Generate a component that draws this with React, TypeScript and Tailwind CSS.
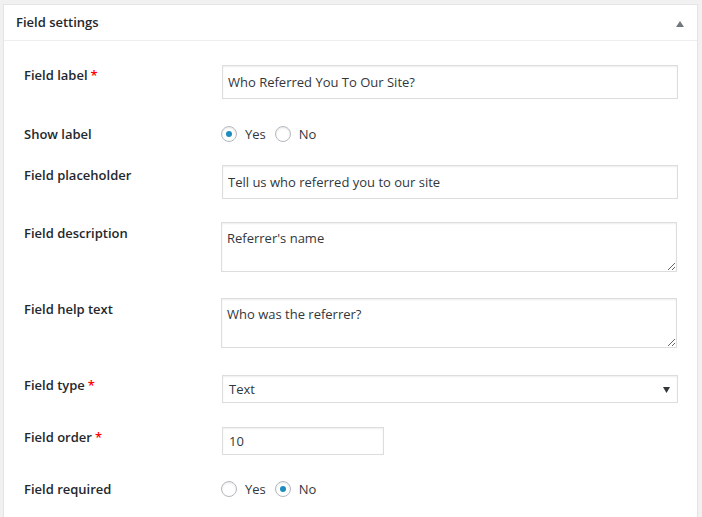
import React from 'react'

const font = { fontFamily: '"Open Sans", "Noto Sans", sans-serif' }

function Label({ text, required, className = '' }: { text: string; required?: boolean; className?: string }) {
  return (
    <div className={`w-[198px] shrink-0 text-[13px] leading-[20px] font-semibold text-[#23282d] ${className}`}>
      {text}
      {required && <span className="text-[#ff0000] ml-[3px]">*</span>}
    </div>
  )
}

function Radio({ checked, label }: { checked?: boolean; label: string }) {
  return (
    <label className="flex items-center">
      <span className="flex h-[16px] w-[16px] items-center justify-center rounded-full border border-[#b4b9be] bg-white shadow-[inset_0_1px_2px_rgba(0,0,0,0.1)]">
        {checked && <span className="h-[6px] w-[6px] rounded-full bg-[#1e8cbe]" />}
      </span>
      <span className="ml-[8px] text-[13px] leading-[20px] text-[#32373c]">{label}</span>
    </label>
  )
}

const inputCls =
  'block border border-[#dddddd] bg-white px-[5px] text-[13px] text-[#32373c] shadow-[inset_0_1px_2px_rgba(0,0,0,0.07)] outline-none'

export default function App() {
  return (
    <div className="h-[517px] overflow-hidden bg-[#f1f1f1] pt-[4px] pl-[3px] pr-[4px]" style={font}>
      <div className="min-h-[560px] border border-[#e5e5e5] bg-white shadow-[0_1px_1px_rgba(0,0,0,0.04)]">
        {/* header */}
        <div className="flex h-[36px] items-center justify-between border-b border-[#eeeeee] pl-[12px] pr-[13px]">
          <span className="text-[13px] font-semibold text-[#23282d]">Field settings</span>
          <svg width="8" height="6" viewBox="0 0 8 6" className="mt-[2px]">
            <path d="M4 0 L8 6 L0 6 Z" fill="#72777c" />
          </svg>
        </div>

        <div className="flex flex-col pl-[20px] pt-[24px]">
          <div className="flex items-start">
            <Label text="Field label" required />
            <input readOnly value="Who Referred You To Our Site?" className={`${inputCls} h-[34px] w-[456px]`} />
          </div>

          <div className="mt-[25px] flex items-center">
            <Label text="Show label" />
            <div className="-ml-[1px] flex items-center gap-[9px]">
              <Radio checked label="Yes" />
              <Radio label="No" />
            </div>
          </div>

          <div className="mt-[21px] flex items-start">
            <Label text="Field placeholder" />
            <input readOnly value="Tell us who referred you to our site" className={`${inputCls} h-[34px] w-[456px]`} />
          </div>

          <div className="mt-[23px] flex items-start">
            <Label text="Field description" className="pt-[1px]" />
            <textarea
              readOnly
              value="Referrer's name"
              className={`${inputCls} -ml-[1px] h-[50px] w-[456px] py-[5px] leading-[20px]`}
            />
          </div>

          <div className="mt-[26px] flex items-start">
            <Label text="Field help text" className="pt-[1px]" />
            <textarea
              readOnly
              value="Who was the referrer?"
              className={`${inputCls} -ml-[1px] h-[50px] w-[456px] py-[5px] leading-[20px]`}
            />
          </div>

          <div className="mt-[27px] flex items-start">
            <Label text="Field type" required />
            <div className={`${inputCls} flex h-[28px] w-[456px] items-center justify-between pl-[6px] pr-[7px] pt-[1px]`}>
              <span>Text</span>
              <svg width="7" height="6" viewBox="0 0 7 6">
                <path d="M0 0 L7 0 L3.5 6 Z" fill="#32373c" />
              </svg>
            </div>
          </div>

          <div className="mt-[24px] flex items-start">
            <Label text="Field order" required />
            <input readOnly value="10" className={`${inputCls} h-[28px] w-[162px] pl-[6px]`} />
          </div>

          <div className="mt-[24px] flex items-center">
            <Label text="Field required" />
            <div className="-ml-[1px] flex items-center gap-[9px]">
              <Radio label="Yes" />
              <Radio checked label="No" />
            </div>
          </div>
        </div>
      </div>
    </div>
  )
}
